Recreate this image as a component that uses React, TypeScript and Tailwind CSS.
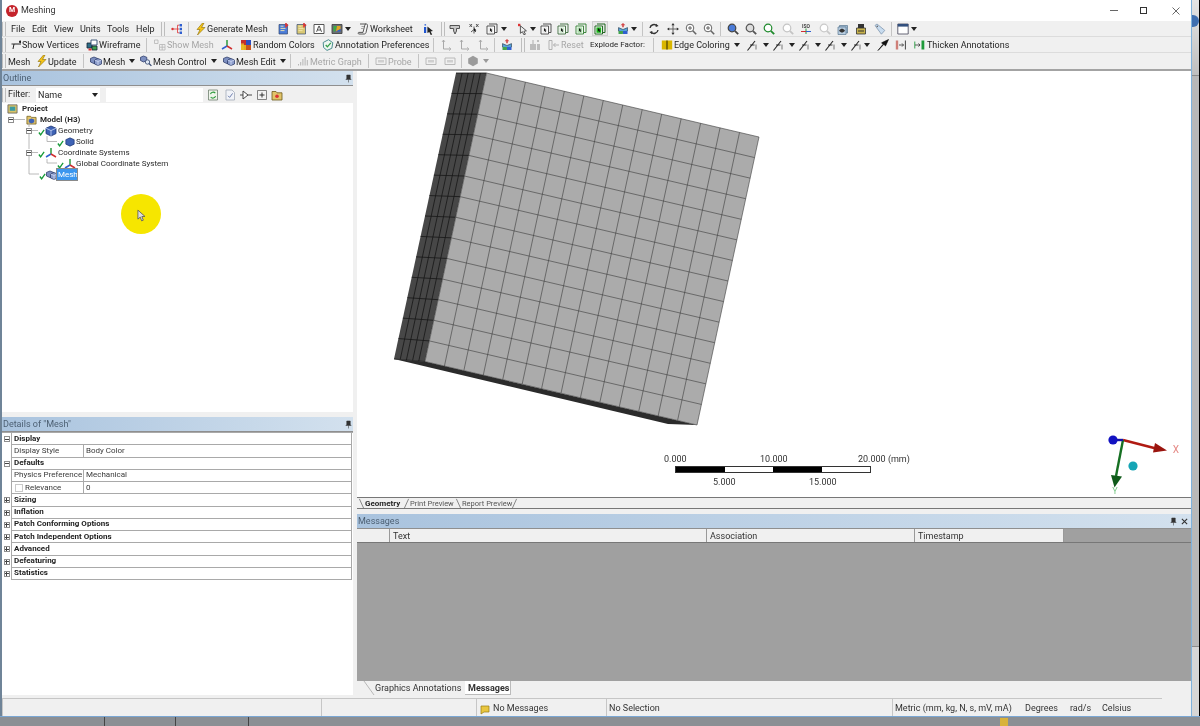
import type { ReactNode } from "react";

const ink = "#1f1f1f";

/* ---------- small toolbar icons, all on a 12x12 box ---------- */
const Svg = ({ children, s = "w-3 h-3" }: { children: ReactNode; s?: string }) => (
  <svg viewBox="0 0 12 12" className={`${s} shrink-0`}>
    {children}
  </svg>
);

const Bolt = () => (
  <svg viewBox="2 0 8 12" className="w-[10px] h-3 shrink-0">
    <path d="M7.5 0 2 6.5h3L2.5 12 10 4.5H6.6L9 0z" fill="#f5c518" stroke="#8a6a00" strokeWidth=".6" />
  </svg>
);
const Cube = ({ c = "#3f63b5", e = "#18306e" }: { c?: string; e?: string }) => (
  <Svg>
    <path d="M6 1 11 3.2V8.6L6 11 1 8.6V3.2z" fill={c} stroke={e} strokeWidth=".8" />
    <path d="M1 3.2 6 5.6 11 3.2M6 5.6V11" fill="none" stroke="#dbe5ff" strokeWidth=".7" />
  </Svg>
);
const MeshCubes = () => (
  <Svg>
    <path d="M4 2 7.5 3.4V7L4 8.6.5 7V3.4z" fill="#7d8fc0" stroke="#1f2f60" strokeWidth=".7" />
    <path d="M8 3.5 11.5 5V9L8 10.5 4.5 9V5z" fill="#8c9dcc" stroke="#1f2f60" strokeWidth=".7" />
    <path d="M4.5 5 8 6.5 11.5 5M8 6.5v4" fill="none" stroke="#e6ecff" strokeWidth=".6" />
  </Svg>
);
const Triad = () => (
  <Svg>
    <path d="M6 7V1" stroke="#2d9a3e" strokeWidth="1.5" />
    <path d="M6 7 1 10" stroke="#2f5fd0" strokeWidth="1.5" />
    <path d="M6 7 11 10" stroke="#d03030" strokeWidth="1.5" />
  </Svg>
);
const Axis = () => (
  <Svg>
    <path d="M2.5 1v9h7" fill="none" stroke="#a9a9a9" strokeWidth="1" />
    <path d="m8 8.3 2 1.7-2 1.7M1 3l1.5-2L4 3" fill="none" stroke="#a9a9a9" strokeWidth=".8" />
  </Svg>
);
const SelBox = ({ fill = "#e8e8e8", stroke = "#444" }: { fill?: string; stroke?: string }) => (
  <Svg>
    <path d="M1 3h7.5v8H1z" fill="#fff" stroke={stroke} strokeWidth=".9" />
    <path d="M3 1h8v8.5H9" fill="none" stroke={stroke} strokeWidth=".9" />
    <path d="M2.4 4.4h4.8v5.4H2.4z" fill={fill} />
    <path d="m4 5 2.4 2.2-1 .2.7 1.4-.7.3-.6-1.4-.8.7z" fill="#111" />
  </Svg>
);
const Mag = ({ c = "#777", inner = "" }: { c?: string; inner?: string }) => (
  <Svg>
    <circle cx="5" cy="5" r="3.8" fill={inner || "#fff"} stroke={c} strokeWidth="1.2" />
    <path d="m7.8 7.8 3.4 3.4" stroke={c} strokeWidth="1.8" />
  </Svg>
);
const MagPlus = () => (
  <Svg>
    <circle cx="5" cy="5" r="3.8" fill="#fff" stroke="#666" strokeWidth="1" />
    <path d="M3 5h4M5 3v4" stroke="#555" strokeWidth=".9" />
    <path d="m7.8 7.8 3.4 3.4" stroke="#666" strokeWidth="1.6" />
  </Svg>
);
const Rotate = () => (
  <Svg>
    <path d="M2 5a4 4 0 0 1 7-2M10 7a4 4 0 0 1-7 2" fill="none" stroke="#333" strokeWidth="1.4" />
    <path d="m8 .8 2.6 2.2L7.6 4zM4 11.2 1.4 9l3-1z" fill="#333" />
  </Svg>
);
const Pan = () => (
  <Svg>
    <path d="M6 1v10M1 6h10" stroke="#555" strokeWidth=".9" />
    <path d="M6 0 7.6 2.2H4.4zM6 12l1.6-2.2H4.4zM0 6l2.2-1.6v3.2zM12 6 9.8 4.4v3.2z" fill="#333" />
  </Svg>
);
const Hand = () => (
  <Svg>
    <path d="M1 2.5h9.5v3H7.5V8L6 11 4.6 8V5.5H1z" fill="#c9c9c9" stroke="#444" strokeWidth=".9" />
  </Svg>
);
const Grid3 = () => (
  <Svg>
    <path d="M1.5 1 4 4M4 1 1.5 4M8 1l2.5 3M10.5 1 8 4" stroke="#444" strokeWidth=".9" />
    <path d="M6 3.5v7M6 6.5 3 9" stroke="#444" strokeWidth=".9" />
    <path d="m6 5 2.4 2.2-1 .2.7 1.4-.7.3-.6-1.4-.8.7z" fill="#111" />
  </Svg>
);
const Info = () => (
  <Svg>
    <path d="M1.5 1.2h1.6v1.4H1.5zM1 4h2.2v6H1z" fill="#1f55d0" />
    <path d="m4.4 3.5 5.6 4.6-2.4.4 1.6 3-1.5.5-1.4-3L4.4 10z" fill="#222" />
  </Svg>
);
const ArrowSel = () => (
  <Svg>
    <path d="M1 .8h2.4v2.4H1z" fill="#d33" />
    <path d="m3.4 2.8 6 5-2.5.4 1.5 3-1.6.5-1.4-3-2 1.6z" fill="#eee" stroke="#333" strokeWidth=".8" />
  </Svg>
);
const Flow = () => (
  <Svg>
    <circle cx="1.6" cy="6" r="1.3" fill="#d33" />
    <path d="M3 6h5M6.5 2.2v7.6M6.5 2.2h2M6.5 9.8h2" stroke="#d33" strokeWidth=".8" />
    <path d="M8.6 1h2.4v2.4H8.6zM8.6 4.8h2.4v2.4H8.6zM8.6 8.6h2.4V11H8.6z" fill="#2f5fd0" />
  </Svg>
);
const Chart = ({ bg = "#4a7bd8" }: { bg?: string }) => (
  <Svg>
    <path d="M2 1.5h8.5v9.5H2z" fill={bg} stroke="#35476f" strokeWidth=".7" />
    <path d="M3.5 3.2h3M3.5 5.4h5M3.5 7.6h4" stroke="#f3e6b0" strokeWidth=".9" />
    <path d="M8.2 0h1.6v1.4h1.4v1.6H9.8v1.4H8.2z" fill="#d33" />
  </Svg>
);
const BoxA = () => (
  <Svg>
    <path d="M1 1.5h10v9H1z" fill="#fff" stroke="#444" strokeWidth=".9" />
    <path d="m3.6 8.8 2.2-5.6h.5l2.2 5.6M4.6 7h2.9" fill="none" stroke="#222" strokeWidth=".8" />
  </Svg>
);
const ColorBox = () => (
  <Svg>
    <path d="M1 1.5h10v9H1z" fill="#6a6f74" stroke="#444" strokeWidth=".9" />
    <path d="M2.5 3h3.5l-2 5.5H2.5z" fill="#3cab45" />
    <path d="M6 3h3.5v3L5 8.5z" fill="#e0a423" />
    <path d="M9.5 6v2.5H5z" fill="#2f5fd0" />
  </Svg>
);
const Scroll = () => (
  <Svg>
    <path d="M3 1h6.5c1 0 1 1 1 2L9 9.5c-.3 1.2-1 1.5-2 1.5H2c-1 0-1.2-1.2-.4-1.6H6L7.8 2.2C8 1.5 8 1 9 1" fill="#f4f4f4" stroke="#444" strokeWidth=".9" />
    <path d="M4.5 3.5h2.5M4 5.5h2.5" stroke="#888" strokeWidth=".7" />
  </Svg>
);
const Vertex = () => (
  <svg viewBox="1 1 10 10" className="w-[10px] h-[10px] shrink-0">
    <path d="M3 10 4 5h7" fill="none" stroke="#222" strokeWidth="1" />
    <path d="M1.5 5h2.5M9.5 2h1.5v1.5H9.5z" fill="#222" stroke="#222" strokeWidth=".9" />
  </svg>
);
const Wire = () => (
  <Svg>
    <path d="M1 4h5v5H1z" fill="#2e6d86" stroke="#123" strokeWidth=".8" />
    <path d="M5 1h6v5H5z" fill="#fff" stroke="#2c4b6d" strokeWidth=".9" />
    <path d="M6 7h5v4H6z" fill="#3f9f4f" stroke="#123" strokeWidth=".8" />
    <path d="M2.5 9.5h3v2h-3z" fill="#d33" />
  </Svg>
);
const MeshGray = () => (
  <Svg>
    <path d="M.5 1h3.5v3.5H.5z" fill="none" stroke="#b5b5b5" strokeWidth=".8" />
    <path d="M5.5 5.5H11V11H5.5zM8.2 5.5V11M5.5 8.2H11" fill="none" stroke="#b5b5b5" strokeWidth=".8" />
  </Svg>
);
const Patches = () => (
  <Svg>
    <path d="M1 1h5v5H1z" fill="#c52f2a" />
    <path d="M6 1h5v5H6z" fill="#2e4fc0" />
    <path d="M1 6h5v5H1z" fill="#e5b01c" />
    <path d="M6 6h5v5H6z" fill="#c8541d" />
    <path d="M1 4.4h3V11H1z" fill="#ecbd29" opacity=".8" />
  </Svg>
);
const Annot = () => (
  <Svg>
    <path d="M1.2 3.5 6.5.7l4.3 3-1 5.6L5 11.4 1.6 8.5z" fill="#eef7f2" stroke="#4a8d8f" strokeWidth="1" />
    <path d="m3.7 6 1.7 1.8L8.8 3.8" fill="none" stroke="#36a04a" strokeWidth="1.3" />
  </Svg>
);
const Explode = () => (
  <Svg>
    <path d="M6 0 8.4 2.3H6.8V4.2H5.2V2.3H3.6z" fill="#d34747" />
    <path d="M1.5 4.6 6 6.5 10.5 4.6v3.3L6 10 1.5 7.9z" fill="#56a3d9" stroke="#234" strokeWidth=".6" />
    <path d="M1.5 7.9V11h4.4V8z" fill="#43a34c" />
    <path d="M6 8v3h4.5V7.9z" fill="#2f5fd0" />
  </Svg>
);
const GrayExplode = () => (
  <Svg>
    <path d="M1 5h6v6H1zM8 1h2v2H8zM8 5h3v6H8z" fill="#bdbdbd" />
    <path d="M3 1h2v4H3z" fill="#cfcfcf" />
  </Svg>
);
const ResetI = () => (
  <Svg>
    <path d="M1 1.5h3v9H1z" fill="none" stroke="#aaa" strokeWidth=".9" />
    <path d="M11 6H5.5M7.5 4 5.5 6l2 2" fill="none" stroke="#aaa" strokeWidth=".9" />
  </Svg>
);
const EdgeColor = () => (
  <Svg>
    <path d="M.8 1.5h10.4v9H.8z" fill="#d9b600" />
    <path d="M6 1.5v9" stroke="#4a3d00" strokeWidth="1.2" />
  </Svg>
);
const EdgeStyle = () => (
  <Svg>
    <path d="M.5 11.5 8 2" stroke="#222" strokeWidth="1.1" />
    <path d="M3 6h4.5" stroke="#222" strokeWidth=".9" />
    <path d="M9 5.5v5" stroke="#777" strokeWidth="1" />
  </Svg>
);
const Pin = () => (
  <Svg>
    <path d="m11.5.5-3 6.4-1.6-1.6L1 11.5l5-6.2L4.6 3.8z" fill="#111" stroke="#111" strokeWidth=".7" />
  </Svg>
);
const Thick = ({ c }: { c: string }) => (
  <Svg>
    <path d="M.8 2.5v7" stroke={c} strokeWidth=".9" />
    <path d="M1 6h5" stroke="#333" strokeWidth=".8" />
    <path d="M7.5 1.5h2.8v9H7.5z" fill={c} />
    <path d="m4.5 4.4 1.5 1.6-1.5 1.6" fill="none" stroke="#333" strokeWidth=".8" />
  </Svg>
);
const ThickRev = () => (
  <Svg>
    <path d="M.8 1.5h2.4v9H.8z" fill="#cf7f78" />
    <path d="M4 6h4.5M7 4.4 8.5 6 7 7.6" fill="none" stroke="#333" strokeWidth=".8" />
    <path d="M10.4 1.5v9" stroke="#444" strokeWidth="1" />
  </Svg>
);
const Iso = () => (
  <Svg>
    <text x="6" y="4.6" textAnchor="middle" fontSize="5" fontWeight="700" fill="#444">ISO</text>
    <path d="M6 5.5V11" stroke="#2d9a3e" strokeWidth="1" />
    <path d="M1 8.5h5" stroke="#d03030" strokeWidth="1" />
    <path d="M6 8.5h5" stroke="#2f5fd0" strokeWidth="1" />
  </Svg>
);
const Eye = () => (
  <Svg>
    <path d="M2.5 2.5h8v7.5h-8z" fill="#9db7cf" stroke="#5a7892" strokeWidth=".7" />
    <path d="M1 4h8v7.5H1z" fill="#b8cde0" stroke="#5a7892" strokeWidth=".7" />
    <path d="M2 7.7c2-2.6 4-2.6 6 0-2 2.4-4 2.4-6 0z" fill="#333" />
  </Svg>
);
const Printer = () => (
  <Svg>
    <path d="M3 1h6v4H3z" fill="#333" />
    <path d="M1.5 5h9v6h-9z" fill="#c7b24b" stroke="#333" strokeWidth=".8" />
    <path d="M3 8h6" stroke="#333" strokeWidth="1" />
  </Svg>
);
const Tag = () => (
  <Svg>
    <path d="M1 2.5 3 1l7.8 6.4-3.4 3.8z" fill="#c8dcef" stroke="#8198b0" strokeWidth=".8" />
    <circle cx="3.3" cy="3.4" r=".8" fill="#666" />
  </Svg>
);
const WinBox = () => (
  <Svg>
    <path d="M.8 1h10.4v10H.8z" fill="#fff" stroke="#556" strokeWidth=".9" />
    <path d="M.8 1h10.4v2.6H.8z" fill="#33507e" />
  </Svg>
);
const GridGray = () => (
  <Svg>
    <path d="M1 3h10v6.5H1z" fill="none" stroke="#b3b3b3" strokeWidth=".9" />
    <path d="M3 5h6v2.5H3z" fill="#cfcfcf" />
  </Svg>
);
const Bars = () => (
  <Svg>
    <path d="M1 10.5h1V9H1zM3.2 10.5h1V7h-1zM5.4 10.5h1V4h-1zM7.6 10.5h1V2h-1zM9.8 10.5h1V5h-1z" fill="#b5b5b5" />
  </Svg>
);
const Hex = () => (
  <Svg>
    <path d="M6 .8 10.8 3.5v5L6 11.2 1.2 8.5v-5z" fill="#9b9b9b" />
  </Svg>
);
const MeshCtl = () => (
  <Svg>
    <path d="M3.5 1 6.8 2.3v3.2L3.5 7 .5 5.5V2.3z" fill="#7d8fc0" stroke="#1f2f60" strokeWidth=".7" />
    <circle cx="7.5" cy="7" r="2.2" fill="#dfe8f5" stroke="#33466e" strokeWidth=".8" />
    <path d="m9 8.5 2.4 2.4" stroke="#33466e" strokeWidth="1.2" />
  </Svg>
);
const RefreshGreen = () => (
  <Svg>
    <path d="M1.5 1h9v10h-9z" fill="#eef5ea" stroke="#6f7f6f" strokeWidth=".8" />
    <path d="M3.5 5.2a2.7 2.7 0 0 1 4.8-1M8.5 7a2.7 2.7 0 0 1-4.8 1" fill="none" stroke="#2b9a3a" strokeWidth="1.1" />
  </Svg>
);
const CheckDoc = () => (
  <Svg>
    <path d="M2 1h6l2.5 2.5V11H2z" fill="#f1f3f8" stroke="#a2a9b8" strokeWidth=".8" />
    <path d="m4 6.8 1.6 1.6 3-4" fill="none" stroke="#6f7fae" strokeWidth="1" />
  </Svg>
);
const Gate = () => (
  <Svg>
    <path d="M3 2v8l5-4zM0 6h3M8 6h4" fill="#fff" stroke="#333" strokeWidth=".9" />
  </Svg>
);
const PlusBox = () => (
  <Svg>
    <path d="M1.5 1.5h9v9h-9z" fill="#f2f2f2" stroke="#666" strokeWidth=".8" />
    <path d="M3.5 6h5M6 3.5v5" stroke="#222" strokeWidth=".9" />
  </Svg>
);
const Folder = ({ inner = "#d33" }: { inner?: string }) => (
  <Svg>
    <path d="M1 2.5h4l1 1.3h5V11H1z" fill="#e2c46a" stroke="#6d5a1a" strokeWidth=".8" />
    <circle cx="6" cy="7.2" r="1.8" fill={inner} />
  </Svg>
);

/* ---------- toolbar pieces ---------- */
const Caret = ({ ml = "ml-[4px]", gray = false }: { ml?: string; gray?: boolean }) => (
  <span className={`${ml} shrink-0 w-0 h-0 border-x-[3px] border-x-transparent border-t-[4px] ${gray ? "border-t-[#999]" : "border-t-[#222]"}`} />
);

const T = ({ w, icon, label, caret, dim, ml }: { w: string; icon?: ReactNode; label?: string; caret?: boolean; dim?: boolean; ml?: string }) => (
  <div className={`${w} shrink-0 flex items-center whitespace-nowrap ${dim ? "text-[#a6a6a6]" : ""}`}>
    {icon}
    {label && <span className="ml-[1px] pt-[2px]">{label}</span>}
    {caret && <Caret ml={ml} />}
  </div>
);

const Sep = ({ w }: { w: string }) => (
  <div className={`${w} shrink-0 flex`}>
    <div className="w-px h-[14px] bg-[#c4c4c4]" />
  </div>
);

const Grip = ({ w }: { w: string }) => (
  <div className={`${w} shrink-0 flex gap-[2px]`}>
    <div className="w-px h-[14px] bg-[#bdbdbd]" />
    <div className="w-px h-[14px] bg-[#bdbdbd]" />
  </div>
);

const Bar = ({ children, cls = "h-4" }: { children: ReactNode; cls?: string }) => (
  <div className={`${cls} flex items-center bg-[#f0f0f0] border-b border-[#dcdcdc]`}>{children}</div>
);

const PanelHead = ({ title, close }: { title: string; close?: boolean }) => (
  <div className="h-[15px] shrink-0 flex items-center justify-between px-[1px] text-[9px] bg-gradient-to-r from-[#a9c3de] to-[#d3e1ee] text-[#4c5f72] border-b border-[#8f8f8f]">
    <span>{title}</span>
    <div className="flex items-center gap-[4px]">
      <svg viewBox="0 0 8 10" className="w-[7px] h-[9px]">
        <path d="M2 1h4v4l1 1H1l1-1zM4 6v3.5" fill="#333" stroke="#333" strokeWidth=".6" />
      </svg>
      {close && (
        <svg viewBox="0 0 8 8" className="w-[7px] h-[7px] mr-[2px]">
          <path d="m1 1 6 6M7 1 1 7" stroke="#333" strokeWidth="1.3" />
        </svg>
      )}
    </div>
  </div>
);

/* ---------- outline tree ---------- */
const Check = () => (
  <svg viewBox="0 0 8 8" className="w-[7px] h-[7px] shrink-0 self-end">
    <path d="m1 4 2 2.6L7 1" fill="none" stroke="#169a38" strokeWidth="1.5" />
  </svg>
);
const Row = ({ pl, children }: { pl: string; children: ReactNode }) => (
  <div className={`h-[11px] flex items-center whitespace-nowrap ${pl}`}>{children}</div>
);
const Box = ({ plus = false }: { plus?: boolean }) => (
  <span className="relative w-[6px] h-[6px] shrink-0 border border-[#8f8f8f] bg-white flex items-center justify-center">
    <span className="w-[4px] h-px bg-[#444]" />
    {plus && <span className="absolute w-px h-[4px] bg-[#444]" />}
  </span>
);

const Tree = () => (
  <div className="relative flex-1 bg-white text-[8px] text-[#2a2a2a]">
    <svg className="absolute left-0 top-0 w-[100px] h-[90px]" viewBox="2 103 100 90">
      <path d="M14 119.5h11M29 123v4M29 133v16M29 155v19h10M32 130.5h6M32 152.5h6M47 136v5.5h10M47 159v4h10" fill="none" stroke="#a8a8a8" strokeWidth=".8" />
    </svg>
    <Row pl="pl-[5px]">
      <span className="w-[11px] h-[11px] shrink-0">
        <Svg s="w-[11px] h-[11px]">
          <path d="M1 2h10v9H1z" fill="#d9c46a" stroke="#555" strokeWidth=".8" />
          <path d="M3 4h6v4.5H3z" fill="#3b9a9f" />
        </Svg>
      </span>
      <b className="ml-[4px] font-bold">Project</b>
    </Row>
    <Row pl="pl-[6px]">
      <Box />
      <span className="w-[12px]" />
      <Svg s="w-[11px] h-[11px]">
        <path d="M1 2.5h4l1 1.2h5V11H1z" fill="#e2c46a" stroke="#6d5a1a" strokeWidth=".8" />
        <path d="M6 4.8 9 6v3L6 10.3 3 9V6z" fill="#3f63b5" />
      </Svg>
      <b className="ml-[3px] font-bold">Model (H3)</b>
    </Row>
    <Row pl="pl-[24px]">
      <Box />
      <span className="w-[6px]" />
      <Check />
      <Cube />
      <span className="ml-[1px]">Geometry</span>
    </Row>
    <Row pl="pl-[55px]">
      <Check />
      <span className="w-[1px]" />
      <Svg s="w-[10px] h-[10px]">
        <path d="M6 1 11 3.2V8.6L6 11 1 8.6V3.2z" fill="#3f63b5" stroke="#18306e" strokeWidth=".8" />
      </Svg>
      <span className="ml-[1px]">Solid</span>
    </Row>
    <Row pl="pl-[24px]">
      <Box />
      <span className="w-[6px]" />
      <Check />
      <Triad />
      <span className="ml-[1px]">Coordinate Systems</span>
    </Row>
    <Row pl="pl-[55px]">
      <Check />
      <Triad />
      <span>Global Coordinate System</span>
    </Row>
    <Row pl="pl-[37px]">
      <Check />
      <MeshCubes />
      <span className="-ml-[1px] px-[1px] w-[20px] h-[11px] leading-[11px] bg-[#3a96ef] text-white outline outline-[#8a8a8a]">Mesh</span>
    </Row>

    {/* pointer highlight from the screen recorder */}
    <div className="absolute left-[119px] top-[91px] w-10 h-10 rounded-full bg-[#f6e600] flex items-center justify-center">
      <svg viewBox="0 0 10 14" className="w-[9px] h-[13px] ml-[1px] mt-[2px]">
        <path d="M1 1v10l2.6-2.2L5.2 13l1.8-.8-1.6-4 3.4-.2z" fill="#ddd" stroke="#555" strokeWidth=".9" />
      </svg>
    </div>
  </div>
);

/* ---------- details grid ---------- */
const Cat = ({ label, open = false }: { label: string; open?: boolean }) => (
  <div className="flex-1 flex items-stretch">
    <div className="w-[9px] shrink-0 flex items-center justify-center bg-white">
      <Box plus={!open} />
    </div>
    <div className="flex-1 border-b border-x border-[#a9a9a9] pl-[2px] flex items-center font-bold text-[#222]">{label}</div>
  </div>
);
const Prop = ({ label, value, check = false }: { label: string; value: string; check?: boolean }) => (
  <div className="flex-1 flex items-stretch">
    <div className="w-[9px] shrink-0" />
    <div className="w-[72px] shrink-0 border-b border-l border-[#a9a9a9] pl-[2px] flex items-center whitespace-nowrap text-[#3a3a3a]">
      {check && <span className="w-[8px] h-[8px] border border-[#c9c9c9] ml-[1px] mr-[2px]" />}
      {label}
    </div>
    <div className="flex-1 border-b border-x border-[#a9a9a9] pl-[2px] flex items-center text-[#3a3a3a]">{value}</div>
  </div>
);

/* ---------- hex mesh drawn in the graphics window ---------- */
const mix = (a: number[], b: number[], t: number) => [a[0] + (b[0] - a[0]) * t, a[1] + (b[1] - a[1]) * t];
const Mesh = () => {
  const tl = [486.5, 73];
  const tr = [759, 137];
  const br = [697, 425];
  const bl = [425, 361.5];
  const otl = [456, 73];
  const obl = [394, 359];
  const n = 14;
  const lines: string[] = [];
  for (let i = 1; i < n; i++) {
    const t = i / n;
    const a = mix(tl, tr, t);
    const b = mix(bl, br, t);
    const c = mix(tl, bl, t);
    const d = mix(tr, br, t);
    lines.push(`M${a[0]} ${a[1]}L${b[0]} ${b[1]}M${c[0]} ${c[1]}L${d[0]} ${d[1]}`);
  }
  const side: string[] = [];
  for (let i = 0; i <= n; i++) {
    const t = i / n;
    const a = mix(otl, obl, t);
    const b = mix(tl, bl, t);
    side.push(`M${a[0]} ${a[1]}L${b[0]} ${b[1]}`);
  }
  for (let i = 1; i < 5; i++) {
    const t = i / 5;
    const a = mix(otl, tl, t);
    const b = mix(obl, bl, t);
    side.push(`M${a[0]} ${a[1]}L${b[0]} ${b[1]}`);
  }
  return (
    <svg className="absolute left-0 top-0 w-[833px] h-[426px]" viewBox="357 71 833 426">
      <path d={`M${otl}L${tl}L${bl}L${obl}z`} fill="#474747" />
      <path d={side.join("")} stroke="#161616" strokeWidth=".8" fill="none" />
      <path d={`M${obl}L${bl}L${br}L668 424z`} fill="#2b2b2b" />
      <path d={`M${tl}L${tr}L${br}L${bl}z`} fill="#ababab" stroke="#3c3c3c" strokeWidth=".6" />
      <path d={lines.join("")} stroke="#3c3c3c" strokeWidth=".6" fill="none" />
    </svg>
  );
};

const Triad3d = () => (
  <svg className="absolute left-[740px] top-[355px] w-[90px] h-[80px]" viewBox="1097 426 90 80">
    <path d="M1123 440 1158 449" stroke="#b01a12" strokeWidth="2.4" />
    <path d="m1155 443 12 7.5-14 2z" fill="#9a140e" />
    <path d="M1123 440 1116 476" stroke="#167023" strokeWidth="2.4" />
    <path d="m1111 475 11 1.5-7.5 11z" fill="#0f5a19" />
    <path d="M1123 440h-8" stroke="#1414a8" strokeWidth="2.4" />
    <circle cx="1113" cy="440" r="4.6" fill="#1212c2" />
    <circle cx="1133" cy="466" r="4.6" fill="#16a5b5" />
    <text x="1176" y="453" textAnchor="middle" fontSize="10" fill="#e58a86">X</text>
    <text x="1115" y="494" textAnchor="middle" fontSize="9" fill="#7ec98a">Y</text>
  </svg>
);

const ScaleBar = () => (
  <div className="absolute left-[307px] top-[384px] w-[250px] text-[#333]">
    <div className="h-[10px] relative whitespace-nowrap">
      <span className="absolute left-0">0.000</span>
      <span className="absolute left-[96px]">10.000</span>
      <span className="absolute left-[194px]">20.000 (mm)</span>
    </div>
    <div className="ml-[11px] mt-[1px] w-[196px] h-[7px] flex border border-[#333]">
      <div className="flex-1 bg-black" />
      <div className="flex-1 bg-white" />
      <div className="flex-1 bg-black" />
      <div className="flex-1 bg-white" />
    </div>
    <div className="h-[12px] mt-[5px] relative whitespace-nowrap">
      <span className="absolute left-[49px]">5.000</span>
      <span className="absolute left-[145px]">15.000</span>
    </div>
  </div>
);

const Slash = ({ d = "M1 1 6 12" }: { d?: string }) => (
  <svg viewBox="0 0 7 13" className="w-[7px] h-[11px] shrink-0">
    <path d={d} stroke="#555" strokeWidth=".8" fill="none" />
  </svg>
);

const Cell = ({ w, children }: { w: string; children?: ReactNode }) => (
  <div className={`${w} shrink-0 h-full flex items-center whitespace-nowrap pl-[2px] pt-[2px] border-t border-l border-[#c6c6c6]`}>{children}</div>
);

export default function App() {
  return (
    <div
      className="w-[1200px] h-[726px] overflow-hidden flex flex-col bg-[#777] text-[9px] leading-none blur-[0.3px]"
      style={{ fontFamily: 'Roboto, "Noto Sans", sans-serif', color: ink }}
    >
      <div className="h-[716px] flex">
        {/* application window */}
        <div className="w-[1192px] flex flex-col border-l-2 border-l-[#6f8498] border-r border-r-[#7fb2dc] bg-white">
          {/* title bar */}
          <div className="h-[21px] flex items-center bg-white pl-[4px]">
            <span className="w-[12px] h-[12px] rounded-full bg-[#c4232b] flex items-center justify-center text-white text-[7px] font-bold">M</span>
            <span className="ml-[3px] text-[9px] text-[#333]">Meshing</span>
            <div className="ml-auto flex items-center text-[#444]">
              <span className="w-[8px] h-px bg-[#666] mr-[22px]" />
              <span className="w-[7px] h-[7px] border border-[#333] mr-[25px]" />
              <svg viewBox="0 0 8 8" className="w-[8px] h-[8px] mr-[11px]">
                <path d="m.5.5 7 7M7.5.5l-7 7" stroke="#444" strokeWidth=".8" />
              </svg>
            </div>
          </div>

          {/* toolbars */}
          <Bar>
            <Grip w="w-[8px]" />
            <T w="w-[21px]" label="File" />
            <T w="w-[22px]" label="Edit" />
            <T w="w-[26px]" label="View" />
            <T w="w-[27px]" label="Units" />
            <T w="w-[29px]" label="Tools" />
            <T w="w-[26px]" label="Help" />
            <Grip w="w-[10px]" />
            <T w="w-[17px]" icon={<Flow />} />
            <Sep w="w-[8px]" />
            <T w="w-[81px]" icon={<Bolt />} label="Generate Mesh" />
            <T w="w-[18px]" icon={<Chart />} />
            <T w="w-[18px]" icon={<Chart bg="#d9c873" />} />
            <T w="w-[18px]" icon={<BoxA />} />
            <T w="w-[26px]" icon={<ColorBox />} caret ml="ml-[2px]" />
            <T w="w-[66px]" icon={<Scroll />} label="Worksheet" />
            <T w="w-[18px]" icon={<Info />} />
            <Grip w="w-[8px]" />
            <T w="w-[19px]" icon={<Hand />} />
            <T w="w-[18px]" icon={<Grid3 />} />
            <T w="w-[31px]" icon={<SelBox />} caret ml="ml-[3px]" />
            <T w="w-[23px]" icon={<ArrowSel />} caret ml="ml-[1px]" />
            <T w="w-[17px]" icon={<SelBox />} />
            <T w="w-[18px]" icon={<SelBox fill="#cfe8cf" stroke="#3a6a3a" />} />
            <T w="w-[17px]" icon={<SelBox fill="#a9dca9" stroke="#2d7d2d" />} />
            <div className="w-[25px] shrink-0 flex items-center">
              <div className="w-[16px] h-[15px] bg-[#e6e6e6] border border-[#cfcfcf] flex items-center justify-center">
                <SelBox fill="#19b319" stroke="#0e5a0e" />
              </div>
            </div>
            <T w="w-[25px]" icon={<Explode />} caret ml="ml-[2px]" />
            <Sep w="w-[6px]" />
            <T w="w-[19px]" icon={<Rotate />} />
            <T w="w-[18px]" icon={<Pan />} />
            <T w="w-[18px]" icon={<MagPlus />} />
            <T w="w-[17px]" icon={<MagPlus />} />
            <Sep w="w-[7px]" />
            <T w="w-[18px]" icon={<Mag c="#444" inner="#4a7bd8" />} />
            <T w="w-[18px]" icon={<Mag c="#555" inner="#ddd" />} />
            <T w="w-[19px]" icon={<Mag c="#1e8a2c" />} />
            <T w="w-[18px]" icon={<Mag c="#c4c4c4" />} />
            <T w="w-[19px]" icon={<Iso />} />
            <T w="w-[18px]" icon={<Mag c="#c9c9c9" />} />
            <T w="w-[18px]" icon={<Eye />} />
            <T w="w-[19px]" icon={<Printer />} />
            <T w="w-[17px]" icon={<Tag />} />
            <Sep w="w-[6px]" />
            <T w="w-[24px]" icon={<WinBox />} caret ml="ml-[2px]" />
          </Bar>
          <Bar>
            <Grip w="w-[9px]" />
            <T w="w-[75px]" icon={<Vertex />} label="Show Vertices" />
            <T w="w-[60px]" icon={<Wire />} label="Wireframe" />
            <Sep w="w-[8px]" />
            <T w="w-[67px]" icon={<MeshGray />} label="Show Mesh" dim />
            <T w="w-[19px]" icon={<Triad />} />
            <T w="w-[82px]" icon={<Patches />} label="Random Colors" />
            <T w="w-[111px]" icon={<Annot />} label="Annotation Preferences" />
            <Sep w="w-[8px]" />
            <T w="w-[18px]" icon={<Axis />} />
            <T w="w-[19px]" icon={<Axis />} />
            <T w="w-[16px]" icon={<Axis />} />
            <Sep w="w-[7px]" />
            <T w="w-[20px]" icon={<Explode />} />
            <Grip w="w-[8px]" />
            <T w="w-[19px]" icon={<GrayExplode />} />
            <T w="w-[42px]" icon={<ResetI />} label="Reset" dim />
            <div className="w-[63px] shrink-0 whitespace-nowrap text-[8px]">Explode Factor:</div>
            <Sep w="w-[8px]" />
            <T w="w-[86px]" icon={<EdgeColor />} label="Edge Coloring" caret />
            <T w="w-[26px]" icon={<EdgeStyle />} caret />
            <T w="w-[26px]" icon={<EdgeStyle />} caret />
            <T w="w-[26px]" icon={<EdgeStyle />} caret />
            <T w="w-[26px]" icon={<EdgeStyle />} caret />
            <T w="w-[26px]" icon={<EdgeStyle />} caret ml="ml-[1px]" />
            <T w="w-[18px]" icon={<Pin />} />
            <T w="w-[19px]" icon={<ThickRev />} />
            <T w="w-[100px]" icon={<Thick c="#1f9a3a" />} label="Thicken Annotations" />
          </Bar>
          <Bar cls="h-[18px] border-b-2 border-b-[#a3a3a3]">
            <Grip w="w-[5px]" />
            <T w="w-[30px]" label="Mesh" />
            <T w="w-[46px]" icon={<Bolt />} label="Update" />
            <Sep w="w-[7px]" />
            <T w="w-[50px]" icon={<MeshCubes />} label="Mesh" caret />
            <T w="w-[83px]" icon={<MeshCtl />} label="Mesh Control" caret />
            <T w="w-[67px]" icon={<MeshCubes />} label="Mesh Edit" caret />
            <Sep w="w-[7px]" />
            <T w="w-[71px]" icon={<Bars />} label="Metric Graph" dim />
            <Sep w="w-[7px]" />
            <T w="w-[43px]" icon={<GridGray />} label="Probe" dim />
            <Sep w="w-[7px]" />
            <T w="w-[19px]" icon={<GridGray />} />
            <T w="w-[17px]" icon={<GridGray />} />
            <Sep w="w-[6px]" />
            <div className="flex items-center">
              <Hex />
              <Caret gray />
            </div>
          </Bar>

          {/* main area */}
          <div className="flex-1 min-h-0 flex bg-[#f0f0f0]">
            {/* left column */}
            <div className="w-[351px] shrink-0 flex flex-col">
              <PanelHead title="Outline" />
              <div className="h-[17px] shrink-0 flex items-center bg-[#f0f0f0]">
                <Grip w="w-[6px]" />
                <span className="w-[28px] shrink-0">Filter:</span>
                <div className="w-[64px] h-[14px] shrink-0 bg-white flex items-center pl-[2px] pt-[1px]">
                  Name
                  <Caret ml="ml-auto mr-[2px]" />
                </div>
                <div className="w-[97px] h-[14px] shrink-0 ml-[6px] bg-white" />
                <div className="ml-[4px] flex items-center">
                  <T w="w-[17px]" icon={<RefreshGreen />} />
                  <T w="w-[16px]" icon={<CheckDoc />} />
                  <T w="w-[16px]" icon={<Gate />} />
                  <T w="w-[15px]" icon={<PlusBox />} />
                  <T w="w-[14px]" icon={<Folder />} />
                </div>
              </div>
              <Tree />
              <div className="h-[5px] shrink-0 bg-[#f0f0f0]" />
              <PanelHead title={'Details of "Mesh"'} />
              <div className="h-[148px] shrink-0 flex flex-col bg-white border-t border-[#a9a9a9] pr-[1px] text-[8px]">
                <Cat label="Display" open />
                <Prop label="Display Style" value="Body Color" />
                <Cat label="Defaults" open />
                <Prop label="Physics Preference" value="Mechanical" />
                <Prop label="Relevance" value="0" check />
                <Cat label="Sizing" />
                <Cat label="Inflation" />
                <Cat label="Patch Conforming Options" />
                <Cat label="Patch Independent Options" />
                <Cat label="Advanced" />
                <Cat label="Defeaturing" />
                <Cat label="Statistics" />
              </div>
              <div className="h-[115px] shrink-0 bg-white" />
              <div className="h-[3px] shrink-0 bg-[#f0f0f0]" />
            </div>
            <div className="w-[4px] shrink-0 bg-[#f0f0f0]" />

            {/* right column */}
            <div className="flex-1 min-w-0 flex flex-col">
              <div className="relative h-[426px] shrink-0 bg-white overflow-hidden">
                <Mesh />
                <ScaleBar />
                <Triad3d />
              </div>
              <div className="h-[12px] shrink-0 flex items-center pl-[1px] pt-[1px] bg-[#f0f0f0] border-y border-[#777] text-[7.5px]">
                <Slash />
                <b className="w-[38px] shrink-0 font-bold text-[8px]">Geometry</b>
                <Slash d="M6 1 1 12" />
                <span className="w-[45px] shrink-0 text-[#555] whitespace-nowrap">Print Preview</span>
                <Slash />
                <span className="w-[49px] shrink-0 text-[#555] whitespace-nowrap">Report Preview</span>
                <Slash d="M6 1 1 12" />
              </div>
              <div className="h-[5px] shrink-0 bg-[#f0f0f0]" />
              <PanelHead title="Messages" close />
              <div className="flex-1 min-h-0 flex flex-col bg-[#a0a0a0]">
                <div className="h-[14px] shrink-0 flex border-b border-[#777] text-[#333]">
                  <div className="w-[33px] shrink-0 bg-[#f0f0f0] border-r border-[#999]" />
                  <div className="w-[317px] shrink-0 bg-[#f0f0f0] border-r border-[#999] flex items-center pl-[3px] pt-[2px]">Text</div>
                  <div className="w-[208px] shrink-0 bg-[#f0f0f0] border-r border-[#999] flex items-center pl-[3px] pt-[2px]">Association</div>
                  <div className="w-[149px] shrink-0 bg-[#f0f0f0] border-r border-[#999] flex items-center pl-[3px] pt-[2px]">Timestamp</div>
                </div>
              </div>
              <div className="h-[14px] shrink-0 flex items-stretch bg-[#f0f0f0] text-[#333]">
                <svg viewBox="0 0 12 14" className="w-[12px] h-[14px] ml-[6px] shrink-0">
                  <path d="M1 0 11 14" stroke="#aaa" strokeWidth=".8" />
                </svg>
                <span className="w-[90px] shrink-0 flex items-center whitespace-nowrap pt-[1px]">Graphics Annotations</span>
                <b className="w-[46px] shrink-0 pl-[3px] pt-[1px] bg-white border-r border-b border-[#bbb] font-bold flex items-center">Messages</b>
              </div>
              <div className="h-[3px] shrink-0 bg-[#f0f0f0]" />
            </div>
          </div>

          {/* status bar */}
          <div className="h-[18px] shrink-0 flex items-center bg-[#f0f0f0] text-[#333]">
            <Cell w="w-[319px]" />
            <Cell w="w-[155px]" />
            <Cell w="w-[130px]">
              <svg viewBox="0 0 12 12" className="w-[12px] h-[12px] shrink-0">
                <path d="M2 3h8v6H5l-3 2z" fill="#e9c63f" stroke="#9a7d12" strokeWidth=".7" />
              </svg>
              <span className="ml-[2px]">No Messages</span>
            </Cell>
            <Cell w="w-[286px]">No Selection</Cell>
            <Cell w="w-[270px]">
              <span className="w-[130px] shrink-0">Metric (mm, kg, N, s, mV, mA)</span>
              <span className="w-[45px] shrink-0">Degrees</span>
              <span className="w-[32px] shrink-0">rad/s</span>
              <span>Celsius</span>
            </Cell>
          </div>
        </div>

        {/* desktop behind the window */}
        <div className="flex-1 flex flex-col bg-[#c6c6c6] border-r border-black">
          <div className="h-[75px] bg-gradient-to-b from-[#e4e4e4] to-[#bfbfbf] flex flex-col items-center pt-[15px]">
            <span className="w-[7px] h-[12px] rounded-r-full bg-[#3f6fb0]" />
          </div>
          <div className="flex-1 bg-[#b8b8b8] border-t border-[#8c8c8c]" />
          <div className="h-[70px] bg-[#d6d6d6] border-t border-[#8c8c8c]" />
        </div>
      </div>

      {/* taskbar peeking out underneath */}
      <div className="h-[10px] border-t border-[#7aa7d4] bg-[#8b8f94] flex items-center">
        <span className="ml-[104px] w-px h-[9px] bg-[#444]" />
        <span className="ml-[70px] w-px h-[9px] bg-[#444]" />
        <span className="ml-[72px] w-px h-[9px] bg-[#444]" />
        <span className="ml-[751px] w-[8px] h-[8px] bg-[#d9b23a]" />
      </div>
    </div>
  );
}
